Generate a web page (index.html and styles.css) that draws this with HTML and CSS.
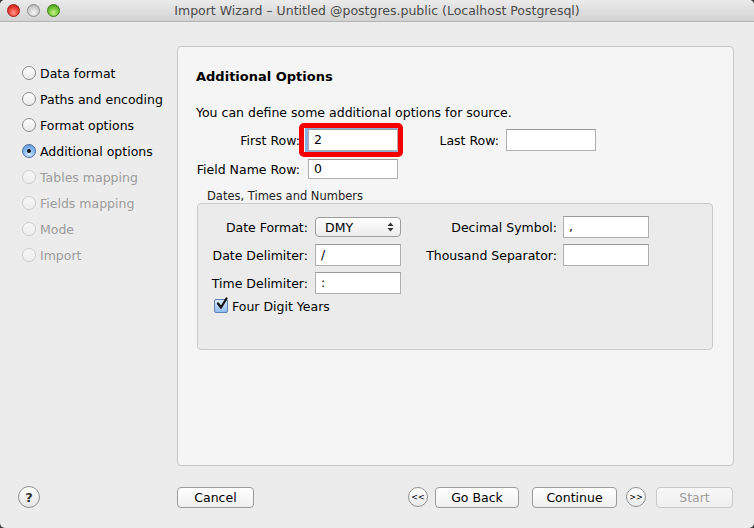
FILE: index.html
```html
<!DOCTYPE html>
<html>
<head>
<meta charset="utf-8">
<link rel="stylesheet" href="styles.css">
</head>
<body>
<div class="window">
  <div class="titlebar">
    <div class="lights">
      <span class="light red"></span>
      <span class="light grey"></span>
      <span class="light green"></span>
    </div>
    <div class="title">Import Wizard – Untitled @postgres.public (Localhost Postgresql)</div>
    <div></div>
  </div>
  <div class="main">
    <div class="sidebar">
      <div class="step"><span class="radio"></span>Data format</div>
      <div class="step"><span class="radio"></span>Paths and encoding</div>
      <div class="step"><span class="radio"></span>Format options</div>
      <div class="step"><span class="radio on"></span>Additional options</div>
      <div class="step off"><span class="radio"></span>Tables mapping</div>
      <div class="step off"><span class="radio"></span>Fields mapping</div>
      <div class="step off"><span class="radio"></span>Mode</div>
      <div class="step off"><span class="radio"></span>Import</div>
    </div>
    <div class="panel">
      <h1 class="heading">Additional Options</h1>
      <p class="desc">You can define some additional options for source.</p>
      <div class="row row-first">
        <label class="lbl lbl-a">First Row:</label>
        <span class="hl-wrap">
          <span class="field focus">2</span>
          <span class="highlight"></span>
        </span>
        <label class="lbl lbl-b">Last Row:</label>
        <span class="field"></span>
      </div>
      <div class="row row-second">
        <label class="lbl lbl-a">Field Name Row:</label>
        <span class="field field-short">0</span>
      </div>
      <div class="group-title">Dates, Times and Numbers</div>
      <div class="group">
        <div class="grow">
          <label class="glbl">Date Format:</label>
          <span class="popup">DMY<svg class="arrows" width="7" height="10" viewBox="0 0 7 10"><path d="M3.5 0.5 L6.5 4 L0.5 4 Z M3.5 9.5 L6.5 6 L0.5 6 Z" fill="#333"/></svg></span>
          <label class="glbl glbl-r">Decimal Symbol:</label>
          <span class="field gfield">,</span>
        </div>
        <div class="grow">
          <label class="glbl">Date Delimiter:</label>
          <span class="field gfield">/</span>
          <label class="glbl glbl-r">Thousand Separator:</label>
          <span class="field gfield"></span>
        </div>
        <div class="grow">
          <label class="glbl">Time Delimiter:</label>
          <span class="field gfield">:</span>
        </div>
        <div class="check-row">
          <span class="checkbox"><svg width="14" height="14" viewBox="0 0 14 14"><path d="M3 6.5 L6 10.5 L11.5 1.5" fill="none" stroke="#111" stroke-width="2.2" stroke-linecap="round" stroke-linejoin="round"/></svg></span>
          Four Digit Years
        </div>
      </div>
    </div>
  </div>
  <div class="footer">
    <span class="help">?</span>
    <span class="btn btn-cancel">Cancel</span>
    <span class="spacer"></span>
    <span class="circ">&lt;&lt;</span>
    <span class="btn btn-back">Go Back</span>
    <span class="btn btn-cont">Continue</span>
    <span class="circ">&gt;&gt;</span>
    <span class="btn btn-start">Start</span>
  </div>
</div>
</body>
</html>
```

FILE: styles.css
```css
html, body {
  margin: 0;
  padding: 0;
  background: #3a3a3a;
}
body {
  font-family: "DejaVu Sans", "Liberation Sans", sans-serif;
  font-size: 12.5px;
  color: #000;
}
.window {
  width: 754px;
  height: 528px;
  background: #ececec;
  border-radius: 5px 5px 5px 5px;
  overflow: hidden;
  display: flex;
  flex-direction: column;
}
.titlebar {
  height: 22px;
  box-sizing: border-box;
  background: linear-gradient(#ebebeb, #d2d2d2);
  border-bottom: 1px solid #b4b4b4;
  display: grid;
  grid-template-columns: 1fr auto 1fr;
  align-items: center;
}
.lights {
  display: flex;
  gap: 7px;
  padding-left: 7px;
}
.light {
  width: 13px;
  height: 13px;
  border-radius: 50%;
  box-sizing: border-box;
}
.light.red {
  background: radial-gradient(circle at 50% 70%, #ff9a8f 0%, #f0473d 45%, #b5150e 100%);
  border: 1px solid #9e1f18;
}
.light.grey {
  background: radial-gradient(circle at 50% 70%, #f4f4f4 0%, #d3d3d3 50%, #a8a8a8 100%);
  border: 1px solid #8e8e8e;
}
.light.green {
  background: radial-gradient(circle at 50% 70%, #c8f08e 0%, #7dcb3f 45%, #3e8a12 100%);
  border: 1px solid #3b7d18;
}
.title {
  font-size: 12.5px;
  color: #4a4a4a;
  white-space: nowrap;
}
.main {
  display: flex;
  height: 444px;
}
.sidebar {
  width: 177px;
  padding: 38px 0 0 22px;
  box-sizing: border-box;
}
.step {
  height: 26px;
  display: flex;
  align-items: center;
  white-space: nowrap;
}
.radio {
  width: 14px;
  height: 14px;
  box-sizing: border-box;
  border-radius: 50%;
  border: 1px solid #8c8c8c;
  background: linear-gradient(#ffffff, #e9e9e9);
  margin-right: 4px;
  position: relative;
  flex: none;
}
.radio.on {
  background: radial-gradient(circle at 50% 75%, #d6ebff 0%, #8dbdf0 45%, #4f8fd6 100%);
  border-color: #4f6f9f;
}
.radio.on::after {
  content: "";
  position: absolute;
  left: 4px;
  top: 4px;
  width: 4px;
  height: 4px;
  border-radius: 50%;
  background: #111;
}
.step.off {
  color: #9b9b9b;
}
.step.off .radio {
  border-color: #cdcdcd;
  background: linear-gradient(#f6f6f6, #eeeeee);
}
.panel {
  margin-top: 24px;
  width: 557px;
  height: 420px;
  box-sizing: border-box;
  background: #f5f5f5;
  border: 1px solid #c7c7c7;
  border-radius: 4px;
  padding: 22px 0 0 18px;
}
.heading {
  margin: 0;
  font-size: 13px;
  font-weight: bold;
  line-height: 16px;
}
.desc {
  margin: 20px 0 0 0;
  line-height: 16px;
}
.row {
  display: flex;
  align-items: center;
  height: 22px;
}
.row-first {
  margin-top: 8px;
}
.row-second {
  margin-top: 7px;
}
.lbl {
  text-align: right;
  white-space: nowrap;
}
.lbl-a {
  width: 104px;
  margin-right: 8px;
}
.lbl-b {
  width: 101px;
  margin-right: 7px;
}
.field {
  width: 90px;
  height: 22px;
  box-sizing: border-box;
  background: #fff;
  border: 1px solid #b0b0b0;
  border-top-color: #9a9a9a;
  padding: 0 5px;
  line-height: 20px;
  display: block;
}
.field-short {
  height: 20px;
  line-height: 18px;
}
.focus {
  box-shadow: -2px 0 0 1px #86aee0, 0 0 0 1px #a9c6ea;
}
.hl-wrap {
  position: relative;
  display: block;
}
.highlight {
  position: absolute;
  left: -9px;
  top: -6px;
  right: -5px;
  bottom: -6px;
  border: 5px solid #f40000;
  border-radius: 5px;
}
.group-title {
  margin: 9px 0 0 11px;
  font-size: 11.5px;
  line-height: 14px;
  color: #222;
}
.group {
  margin: 0 0 0 1px;
  width: 516px;
  height: 147px;
  box-sizing: border-box;
  background: #ebebeb;
  border: 1px solid #cbcbcb;
  border-radius: 4px;
  padding-top: 12px;
}
.grow {
  display: flex;
  align-items: center;
  height: 22px;
  margin-bottom: 6px;
}
.glbl {
  width: 110px;
  text-align: right;
  margin-right: 7px;
  white-space: nowrap;
}
.glbl-r {
  width: 156px;
  margin-right: 6px;
}
.gfield {
  width: 86px;
}
.popup {
  width: 86px;
  height: 20px;
  box-sizing: border-box;
  border: 1px solid #9d9d9d;
  border-radius: 4px;
  background: linear-gradient(#ffffff, #ececec);
  display: flex;
  align-items: center;
  padding-left: 9px;
  position: relative;
}
.arrows {
  position: absolute;
  right: 6px;
  top: 4px;
}
.check-row {
  display: flex;
  align-items: center;
  padding-left: 16px;
  margin-top: -5px;
  height: 22px;
}
.checkbox {
  width: 14px;
  height: 14px;
  box-sizing: border-box;
  border: 1px solid #5f7fae;
  border-radius: 2px;
  background: linear-gradient(#d8eaff, #8fbcef);
  margin-right: 4px;
  display: block;
  position: relative;
}
.checkbox svg {
  position: absolute;
  left: 0;
  top: -3px;
}
.footer {
  flex: 1;
  display: flex;
  align-items: center;
  padding: 0 21px 0 18px;
}
.help {
  width: 22px;
  height: 22px;
  box-sizing: border-box;
  border-radius: 50%;
  border: 1px solid #8f8f8f;
  background: linear-gradient(#ffffff, #e6e6e6);
  display: flex;
  align-items: center;
  justify-content: center;
  font-weight: bold;
  font-size: 13px;
  color: #333;
}
.btn {
  height: 21px;
  box-sizing: border-box;
  border: 1px solid #9b9b9b;
  border-radius: 4px;
  background: linear-gradient(#ffffff, #f0f0f0);
  display: flex;
  align-items: center;
  justify-content: center;
  font-size: 12.5px;
}
.btn-cancel {
  width: 77px;
  margin-left: 137px;
}
.spacer {
  flex: 1;
}
.circ {
  width: 20px;
  height: 20px;
  box-sizing: border-box;
  border-radius: 50%;
  border: 1px solid #929292;
  background: linear-gradient(#ffffff, #ececec);
  display: flex;
  align-items: center;
  justify-content: center;
  font-size: 8px;
}
.btn-back {
  width: 84px;
  margin-left: 7px;
  margin-right: 13px;
}
.btn-cont {
  width: 85px;
  margin-right: 9px;
}
.btn-start {
  width: 77px;
  margin-left: 10px;
  color: #9e9e9e;
  border-color: #c9c9c9;
  background: linear-gradient(#f8f8f8, #efefef);
}
```
